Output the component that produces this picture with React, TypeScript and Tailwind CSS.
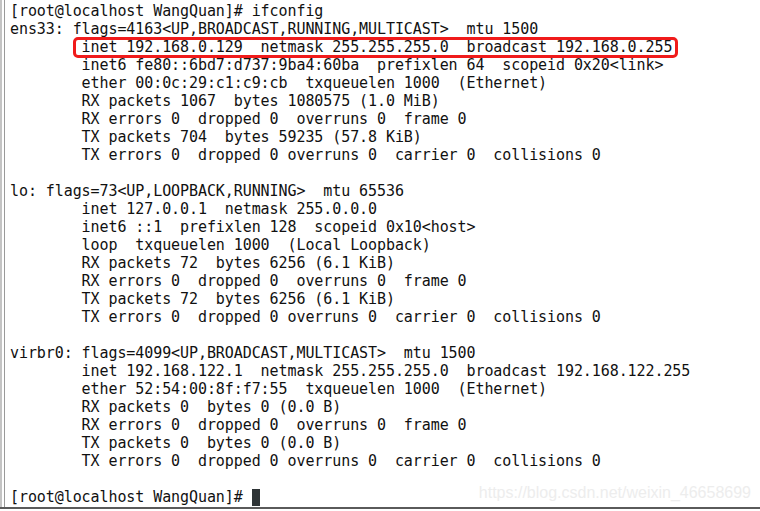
const lines: string[] = [
  '[root@localhost WangQuan]# ifconfig',
  'ens33: flags=4163<UP,BROADCAST,RUNNING,MULTICAST>  mtu 1500',
  '        inet 192.168.0.129  netmask 255.255.255.0  broadcast 192.168.0.255',
  '        inet6 fe80::6bd7:d737:9ba4:60ba  prefixlen 64  scopeid 0x20<link>',
  '        ether 00:0c:29:c1:c9:cb  txqueuelen 1000  (Ethernet)',
  '        RX packets 1067  bytes 1080575 (1.0 MiB)',
  '        RX errors 0  dropped 0  overruns 0  frame 0',
  '        TX packets 704  bytes 59235 (57.8 KiB)',
  '        TX errors 0  dropped 0 overruns 0  carrier 0  collisions 0',
  '',
  'lo: flags=73<UP,LOOPBACK,RUNNING>  mtu 65536',
  '        inet 127.0.0.1  netmask 255.0.0.0',
  '        inet6 ::1  prefixlen 128  scopeid 0x10<host>',
  '        loop  txqueuelen 1000  (Local Loopback)',
  '        RX packets 72  bytes 6256 (6.1 KiB)',
  '        RX errors 0  dropped 0  overruns 0  frame 0',
  '        TX packets 72  bytes 6256 (6.1 KiB)',
  '        TX errors 0  dropped 0 overruns 0  carrier 0  collisions 0',
  '',
  'virbr0: flags=4099<UP,BROADCAST,MULTICAST>  mtu 1500',
  '        inet 192.168.122.1  netmask 255.255.255.0  broadcast 192.168.122.255',
  '        ether 52:54:00:8f:f7:55  txqueuelen 1000  (Ethernet)',
  '        RX packets 0  bytes 0 (0.0 B)',
  '        RX errors 0  dropped 0  overruns 0  frame 0',
  '        TX packets 0  bytes 0 (0.0 B)',
  '        TX errors 0  dropped 0 overruns 0  carrier 0  collisions 0',
  '',
]

export default function App() {
  return (
    <div className="relative w-[760px] h-[511px] overflow-hidden bg-white">
      <div className="flex h-[509px] border-b-2 border-[#5a5a5a]">
        <div className="w-[5px] flex shrink-0">
          <div className="w-[2px] bg-[#c4c4c4]" />
          <div className="w-[2px] bg-white" />
          <div className="w-[1px] bg-[#9a9a9a]" />
        </div>
        <pre className="pl-[5px] pt-[2px] font-['DejaVu_Sans_Mono',monospace] text-[15px] leading-[18px] tracking-[-0.08px] text-[#111] whitespace-pre">
          {lines.map((l, i) => (
            <div key={i} className="h-[18px]">
              {l}
            </div>
          ))}
          <div className="h-[18px] flex items-center">
            <span>[root@localhost WangQuan]# </span>
            <span className="inline-block w-[8px] h-[17px] bg-[#2e3436]" />
          </div>
        </pre>
      </div>

      {/* highlight around the ens33 inet line */}
      <div className="absolute left-[73px] top-[37px] w-[605px] h-[21px] border-[3px] border-[#f01b1b] rounded-[5px]" />

      <div className="absolute right-[9px] bottom-[6px] font-['Liberation_Sans',sans-serif] text-[16px] text-[#ededed]">
        https://blog.csdn.net/weixin_46658699
      </div>
    </div>
  )
}
